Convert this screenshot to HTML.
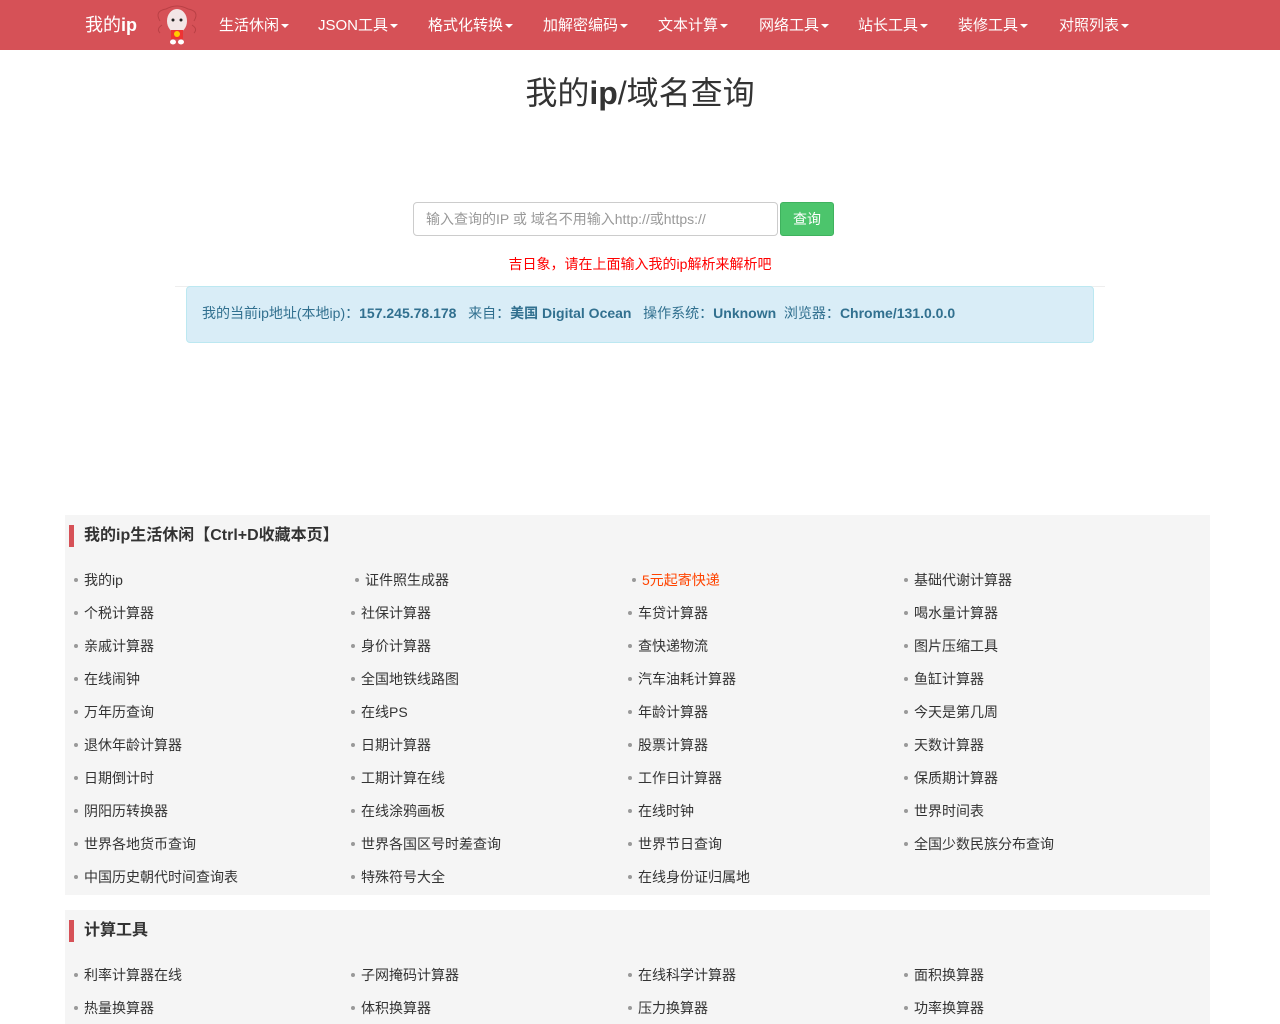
<!DOCTYPE html>
<html><head><meta charset="utf-8"><style>
*{margin:0;padding:0;box-sizing:border-box}
body{width:1280px;height:1024px;overflow:hidden;background:#fff;font-family:"Liberation Sans","Noto Sans CJK SC",sans-serif;font-size:14px;color:#333}
.nav{height:50px;background:#d65157;position:relative;color:#fff}
.nav .brand{position:absolute;left:85px;top:11px;font-size:18px}
.nav .m{position:absolute;top:14px;font-size:15px}
.caret{display:inline-block;width:0;height:0;border-left:4px solid transparent;border-right:4px solid transparent;border-top:4px solid #fff;vertical-align:middle;margin-left:2px}
h1{position:absolute;top:68px;width:1280px;text-align:center;font-size:32px;font-weight:normal;color:#333}
.inp{position:absolute;left:413px;top:202px;width:365px;height:34px;border:1px solid #ccc;border-radius:4px;padding:6px 12px;color:#999;font-size:14px}
.btn{position:absolute;left:780px;top:202px;width:54px;height:34px;background:#4cc56c;border:1px solid #3fb25e;border-radius:3px;color:#fff;font-size:14px;text-align:center;line-height:32px}
.tip{position:absolute;top:254px;width:1280px;text-align:center;color:#f00;font-size:14px}
.hr{position:absolute;left:175px;top:286px;width:930px;border-top:1px solid #eee}
.alert{position:absolute;left:186px;top:286px;width:908px;height:57px;background:#d9edf7;border:1px solid #bce8f1;border-radius:4px;color:#31708f;padding:16px 15px;font-size:14px}
.alert b{font-weight:bold}
.sec{position:absolute;left:65px;width:1145px;background:#f5f5f5}
.sec h3{position:absolute;left:4px;top:10px;border-left:5px solid #d65157;padding-left:10px;font-size:16px;height:22px;line-height:22px;font-weight:bold;color:#333}
.it{position:absolute;font-size:14px;color:#333}
.it:before{content:"";position:absolute;left:-10px;top:8px;width:4px;height:4px;border-radius:2px;background:#999}
</style></head><body>
<div class="nav">
<div class="brand">我的<b>ip</b></div>
<svg style="position:absolute;left:152px;top:1px" width="50" height="46" viewBox="0 0 50 46"><g fill="none" stroke="#b94045" stroke-width="1"><path d="M8 20 Q2 10 14 8 Q25 2 36 8 Q48 10 42 20"/><path d="M10 24 Q4 28 8 32 M40 24 Q46 28 42 32"/></g><ellipse cx="25" cy="20" rx="10" ry="12" fill="#f3e6e6"/><circle cx="21" cy="19" r="1.5" fill="#222"/><circle cx="29" cy="19" r="1.5" fill="#222"/><rect x="19" y="29" width="12" height="9" fill="#e33"/><circle cx="25" cy="33" r="3" fill="#fc0"/><ellipse cx="21" cy="41" rx="3" ry="2.5" fill="#fff"/><ellipse cx="29" cy="41" rx="3" ry="2.5" fill="#fff"/></svg>
<div class="m" style="left:219px">生活休闲<span class="caret"></span></div>
<div class="m" style="left:318px">JSON工具<span class="caret"></span></div>
<div class="m" style="left:428px">格式化转换<span class="caret"></span></div>
<div class="m" style="left:543px">加解密编码<span class="caret"></span></div>
<div class="m" style="left:658px">文本计算<span class="caret"></span></div>
<div class="m" style="left:759px">网络工具<span class="caret"></span></div>
<div class="m" style="left:858px">站长工具<span class="caret"></span></div>
<div class="m" style="left:958px">装修工具<span class="caret"></span></div>
<div class="m" style="left:1059px">对照列表<span class="caret"></span></div>
</div>
<h1>我的<b>ip</b>/域名查询</h1>
<div class="inp">输入查询的IP 或 域名不用输入http://或https://</div>
<div class="btn">查询</div>
<div class="tip">吉日象，请在上面输入我的ip解析来解析吧</div>
<div class="hr"></div>
<div class="alert">我的当前ip地址(本地ip)：<b>157.245.78.178</b> &nbsp; 来自：<b>美国 Digital Ocean</b> &nbsp; 操作系统：<b>Unknown</b> &nbsp;浏览器：<b>Chrome/131.0.0.0</b></div>

<div class="sec" style="top:515px;height:380px">
<h3>我的ip生活休闲【Ctrl+D收藏本页】</h3>
</div>
<div class="sec" style="top:910px;height:114px">
<h3>计算工具</h3>
</div>
<div>
<span class="it" style="left:84px;top:570px">我的ip</span><span class="it" style="left:365px;top:570px">证件照生成器</span><span class="it" style="left:642px;top:570px;color:#f40">5元起寄快递</span><span class="it" style="left:914px;top:570px">基础代谢计算器</span>
<span class="it" style="left:84px;top:603px">个税计算器</span><span class="it" style="left:361px;top:603px">社保计算器</span><span class="it" style="left:638px;top:603px">车贷计算器</span><span class="it" style="left:914px;top:603px">喝水量计算器</span>
<span class="it" style="left:84px;top:636px">亲戚计算器</span><span class="it" style="left:361px;top:636px">身价计算器</span><span class="it" style="left:638px;top:636px">查快递物流</span><span class="it" style="left:914px;top:636px">图片压缩工具</span>
<span class="it" style="left:84px;top:669px">在线闹钟</span><span class="it" style="left:361px;top:669px">全国地铁线路图</span><span class="it" style="left:638px;top:669px">汽车油耗计算器</span><span class="it" style="left:914px;top:669px">鱼缸计算器</span>
<span class="it" style="left:84px;top:702px">万年历查询</span><span class="it" style="left:361px;top:702px">在线PS</span><span class="it" style="left:638px;top:702px">年龄计算器</span><span class="it" style="left:914px;top:702px">今天是第几周</span>
<span class="it" style="left:84px;top:735px">退休年龄计算器</span><span class="it" style="left:361px;top:735px">日期计算器</span><span class="it" style="left:638px;top:735px">股票计算器</span><span class="it" style="left:914px;top:735px">天数计算器</span>
<span class="it" style="left:84px;top:768px">日期倒计时</span><span class="it" style="left:361px;top:768px">工期计算在线</span><span class="it" style="left:638px;top:768px">工作日计算器</span><span class="it" style="left:914px;top:768px">保质期计算器</span>
<span class="it" style="left:84px;top:801px">阴阳历转换器</span><span class="it" style="left:361px;top:801px">在线涂鸦画板</span><span class="it" style="left:638px;top:801px">在线时钟</span><span class="it" style="left:914px;top:801px">世界时间表</span>
<span class="it" style="left:84px;top:834px">世界各地货币查询</span><span class="it" style="left:361px;top:834px">世界各国区号时差查询</span><span class="it" style="left:638px;top:834px">世界节日查询</span><span class="it" style="left:914px;top:834px">全国少数民族分布查询</span>
<span class="it" style="left:84px;top:867px">中国历史朝代时间查询表</span><span class="it" style="left:361px;top:867px">特殊符号大全</span><span class="it" style="left:638px;top:867px">在线身份证归属地</span>
<span class="it" style="left:84px;top:965px">利率计算器在线</span><span class="it" style="left:361px;top:965px">子网掩码计算器</span><span class="it" style="left:638px;top:965px">在线科学计算器</span><span class="it" style="left:914px;top:965px">面积换算器</span>
<span class="it" style="left:84px;top:998px">热量换算器</span><span class="it" style="left:361px;top:998px">体积换算器</span><span class="it" style="left:638px;top:998px">压力换算器</span><span class="it" style="left:914px;top:998px">功率换算器</span>
</div>
</body></html>
